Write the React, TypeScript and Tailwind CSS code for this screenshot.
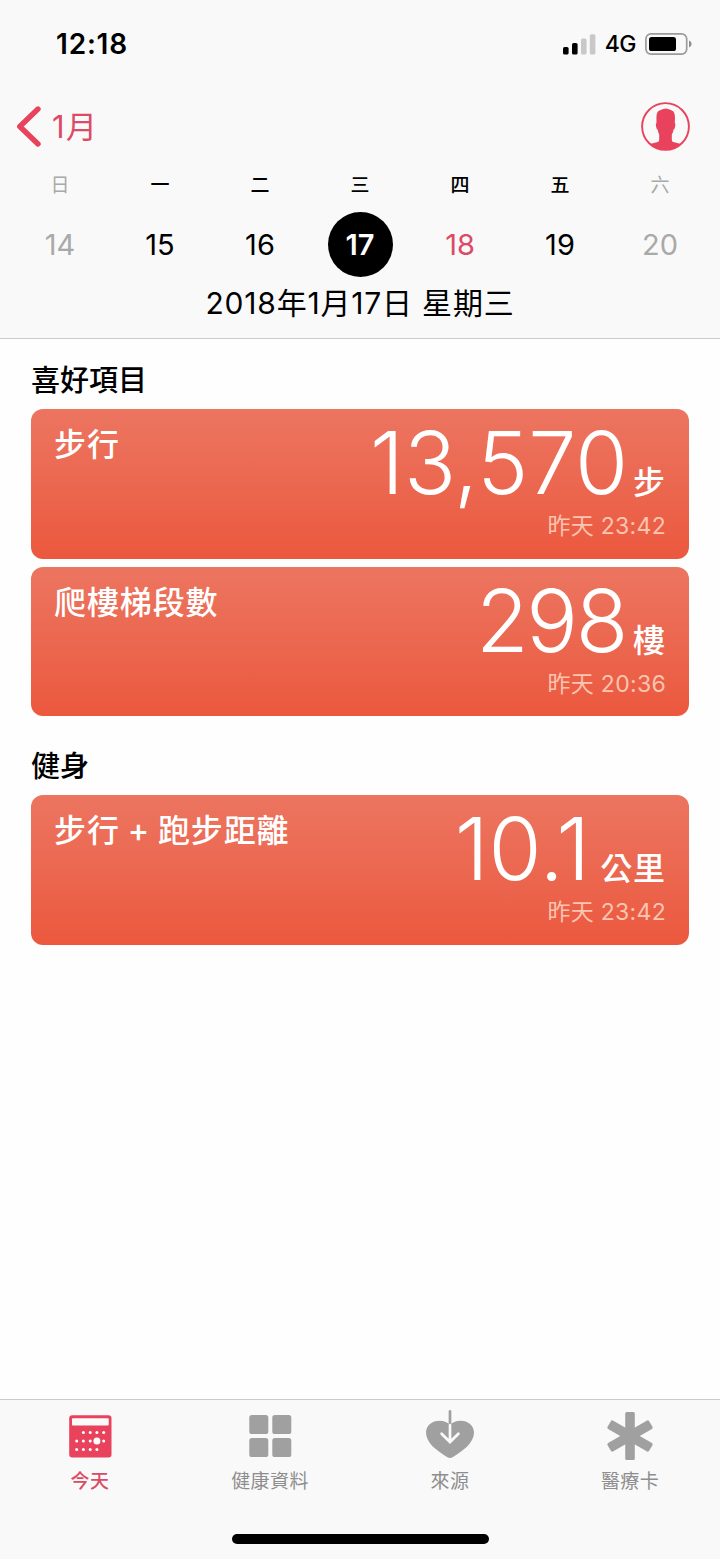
type Day = { name: string; date: number; tone: string; selected?: boolean };

type Metric = {
  title: string;
  value: string;
  unit: string;
  time: string;
  spacing: string;
};

const days: Day[] = [
  { name: "日", date: 14, tone: "text-[#a9a9a9]" },
  { name: "一", date: 15, tone: "text-black" },
  { name: "二", date: 16, tone: "text-black" },
  { name: "三", date: 17, tone: "text-white", selected: true },
  { name: "四", date: 18, tone: "text-[#dc4b64]" },
  { name: "五", date: 19, tone: "text-black" },
  { name: "六", date: 20, tone: "text-[#a9a9a9]" },
];

const favorites: Metric[] = [
  {
    title: "步行",
    value: "13,570",
    unit: "步",
    time: "昨天 23:42",
    spacing: "tracking-normal mr-[5px]",
  },
  {
    title: "爬樓梯段數",
    value: "298",
    unit: "樓",
    time: "昨天 20:36",
    spacing: "tracking-[-2.3px] mr-[7px]",
  },
];

const fitness: Metric[] = [
  {
    title: "步行 + 跑步距離",
    value: "10.1",
    unit: "公里",
    time: "昨天 23:42",
    spacing: "tracking-normal mr-[10px]",
  },
];

const SignalIcon = () => (
  <svg width="33" height="21" viewBox="0 0 33 21">
    <rect x="0" y="13" width="5.6" height="7.5" rx="1.6" fill="#000" />
    <rect x="9" y="9" width="5.6" height="11.5" rx="1.6" fill="#000" />
    <rect x="18" y="4.6" width="5.6" height="15.9" rx="1.6" fill="#c8c8c8" />
    <rect x="26.8" y="0.2" width="5.6" height="20.3" rx="1.6" fill="#c8c8c8" />
  </svg>
);

const BatteryIcon = () => (
  <svg width="47" height="22" viewBox="0 0 47 22">
    <rect
      x="0.9"
      y="0.9"
      width="40.8"
      height="20.2"
      rx="5"
      fill="none"
      stroke="#9b9b9b"
      strokeWidth="1.7"
    />
    <rect x="4" y="4" width="27" height="14" rx="2.6" fill="#000" />
    <path d="M44 7.6c3.4 1.2 3.4 5.6 0 6.8z" fill="#8f8f8f" />
  </svg>
);

const ProfileIcon = () => (
  <svg width="49" height="49" viewBox="0 0 49 49">
    <clipPath id="avatar">
      <circle cx="24.5" cy="24.5" r="23.5" />
    </clipPath>
    <circle
      cx="24.5"
      cy="24.5"
      r="23.4"
      fill="none"
      stroke="#e9425c"
      strokeWidth="1.9"
    />
    <path
      clipPath="url(#avatar)"
      fill="#e9425c"
      d="M24.8 6.4C21.500 6.800 18.500 8 17 9.500C15.400 11.500 15.300 14.500 15.500 21C14.600 21.400 14.800 23.500 15.300 25.500C15.600 26.800 16 27.500 16.700 27.600C17 30 17.600 31.500 18.200 32.600V37.500C18.200 39.200 17.400 39.900 15.800 40.300L9 42L4 49H45L40 42L33.200 40.300C31.600 39.900 30.800 39.200 30.800 37.500V32.600C31.600 31.500 32.200 30 32.500 27.600C33.200 27.500 33.600 26.800 33.900 25.500C34.400 23.500 34.600 21.400 33.800 21C34.200 14.500 34 11.500 32.400 9.500C30.800 8 28 6.800 24.800 6.400z"
    />
  </svg>
);

const CalendarIcon = () => (
  <svg className="mt-[15px]" width="43" height="43" viewBox="0 0 43 43">
    <rect x="0.2" y="0.2" width="42.3" height="42.3" rx="3" fill="#e9425c" />
    <rect x="3" y="3.2" width="36.7" height="7.4" rx="0.8" fill="#fafafa" />
    <g fill="#fff">
      <circle cx="14.4" cy="17.6" r="1.5" />
      <circle cx="21.2" cy="17.6" r="1.5" />
      <circle cx="27.9" cy="17.6" r="1.5" />
      <circle cx="34.7" cy="17.6" r="1.5" />
      <circle cx="7.7" cy="26" r="1.5" />
      <circle cx="14.4" cy="26" r="1.5" />
      <circle cx="21.2" cy="26" r="1.5" />
      <circle cx="27.9" cy="26" r="3.5" />
      <circle cx="34.7" cy="26" r="1.5" />
      <circle cx="7.7" cy="34.5" r="1.5" />
      <circle cx="14.4" cy="34.5" r="1.5" />
      <circle cx="21.2" cy="34.5" r="1.5" />
      <circle cx="27.9" cy="34.5" r="1.5" />
    </g>
  </svg>
);

const GridIcon = () => (
  <svg
    className="mt-[15px]"
    width="43"
    height="43"
    viewBox="0 0 43 43"
    fill="#a0a0a0"
  >
    <rect x="0.3" y="0.1" width="19" height="19" rx="2.6" />
    <rect x="23.3" y="0.1" width="19" height="19" rx="2.6" />
    <rect x="0.3" y="23.1" width="19" height="19" rx="2.6" />
    <rect x="23.3" y="23.1" width="19" height="19" rx="2.6" />
  </svg>
);

const HeartIcon = () => (
  <svg className="mt-[10px]" width="48" height="48" viewBox="0 0 48 48">
    <path
      fill="#a0a0a0"
      d="M24 15c2-2.700 6-4.300 10.500-4.300C42 10.700 48 15.600 48 22.600 48 33 37 41 26.600 47.200c-1.700 1-3.500 1-5.200 0C11 41 0 33 0 22.600c0-7 6-11.900 13.500-11.900C18 10.700 22 12.300 24 15z"
    />
    <path
      d="M24 1.400V15"
      stroke="#a0a0a0"
      strokeWidth="2.7"
      strokeLinecap="round"
    />
    <path
      d="M24 15v17.200M15.600 23.800l8.400 8.200 8.400-8.200"
      fill="none"
      stroke="#fafafa"
      strokeWidth="2.7"
      strokeLinecap="round"
    />
  </svg>
);

const AsteriskIcon = () => (
  <svg
    className="mt-[12px]"
    width="48"
    height="48"
    viewBox="0 0 48 48"
    fill="#a0a0a0"
  >
    <rect x="19.2" y="0" width="9.6" height="48" rx="1.5" />
    <rect
      x="19.2"
      y="0"
      width="9.6"
      height="48"
      rx="1.5"
      transform="rotate(60 24 24)"
    />
    <rect
      x="19.2"
      y="0"
      width="9.6"
      height="48"
      rx="1.5"
      transform="rotate(120 24 24)"
    />
  </svg>
);

const tabs = [
  { label: "今天", icon: <CalendarIcon />, active: true },
  { label: "健康資料", icon: <GridIcon />, active: false },
  { label: "來源", icon: <HeartIcon />, active: false },
  { label: "醫療卡", icon: <AsteriskIcon />, active: false },
];

const MetricCard = ({ title, value, unit, time, spacing }: Metric) => (
  <div className="flex h-[149.5px] justify-between rounded-xl bg-linear-to-b from-[#ec7560] to-[#eb583e] px-[23px] text-white">
    <h3 className="pt-[18px] text-[32px] leading-9 font-medium tracking-[0.9px] [word-spacing:-1.5px]">
      {title}
    </h3>
    <div className="flex flex-col items-end pt-[11px]">
      <div className="flex items-baseline">
        <span
          className={`text-[86px] leading-[86px] font-light ${spacing}`}
        >
          {value}
        </span>
        <span className="text-[32px] leading-9 font-medium tracking-[0.9px]">
          {unit}
        </span>
      </div>
      <span className="mt-[8px] text-[23px] leading-6 tracking-[0.3px] text-[#fbc5b0]">
        {time}
      </span>
    </div>
  </div>
);

const App = () => {
  return (
    <div className="flex h-[1559px] w-[720px] flex-col overflow-hidden bg-[#fefefe] font-['Inter','Noto_Sans_CJK_TC',sans-serif] text-black">
      <header className="h-[339px] border-b border-[#cbcbcb] bg-[#f9f9f9]">
        <div className="flex h-[88px] items-center justify-between pr-7 pl-14">
          <span className="text-[28px] leading-8 font-semibold tracking-[0.8px]">
            12:18
          </span>
          <div className="flex items-center">
            <SignalIcon />
            <span className="mr-[9px] ml-[9px] text-[23px] leading-6 font-medium tracking-[-0.5px]">
              4G
            </span>
            <BatteryIcon />
          </div>
        </div>

        <div className="flex h-[77px] items-center justify-between pr-[30px] pl-4 text-[#dc4b64]">
          <button className="flex items-center gap-[11px]">
            <svg width="25" height="41" viewBox="0 0 25 41">
              <path
                d="M22 3L3.800 20.500L22 38"
                fill="none"
                stroke="#e9425c"
                strokeWidth="5.4"
                strokeLinecap="round"
                strokeLinejoin="round"
              />
            </svg>
            <span className="pt-px text-[31px] leading-9 tracking-[1.5px]">
              1月
            </span>
          </button>
          <ProfileIcon />
        </div>

        <div className="grid grid-cols-7 px-[10px]">
          {days.map((day) => (
            <div key={day.date} className="flex flex-col items-center">
              <span
                className={`pt-[9px] text-[19px] leading-6 ${
                  day.tone === "text-[#a9a9a9]"
                    ? "text-[#a9a9a9]"
                    : "font-medium text-black"
                }`}
              >
                {day.name}
              </span>
              <span
                className={`mt-[14px] flex size-[65px] items-center justify-center rounded-full text-[29px] leading-9 ${day.tone} ${
                  day.selected ? "bg-black font-semibold" : ""
                }`}
              >
                {day.date}
              </span>
            </div>
          ))}
        </div>
        <p className="mt-[8px] text-center text-[30px] leading-9 tracking-[0.8px]">
          2018年1月17日 星期三
        </p>
      </header>

      <main className="flex-1 px-[31px]">
        <h2 className="mt-[26px] mb-[12px] text-[29px] leading-8 font-medium">
          喜好項目
        </h2>
        <div className="flex flex-col gap-2">
          {favorites.map((item) => (
            <MetricCard key={item.title} {...item} />
          ))}
        </div>
        <h2 className="mt-[35px] mb-[12px] text-[29px] leading-8 font-medium">
          健身
        </h2>
        {fitness.map((item) => (
          <MetricCard key={item.title} {...item} />
        ))}
      </main>

      <footer className="flex h-[160px] flex-col items-center border-t border-[#cbcbcb] bg-[#f9f9f9]">
        <nav className="grid w-full grid-cols-4">
          {tabs.map((tab) => (
            <button
              key={tab.label}
              className={`flex flex-col items-center ${
                tab.active ? "text-[#dc4b64]" : "text-[#8e8e8e]"
              }`}
            >
              <span className="flex h-[70px] items-start justify-center">
                {tab.icon}
              </span>
              <span
                className={`text-[19px] leading-6 tracking-[0.4px] ${
                  tab.active ? "font-medium" : ""
                }`}
              >
                {tab.label}
              </span>
            </button>
          ))}
        </nav>
        <div className="mt-[40px] h-[10px] w-[257px] rounded-full bg-black" />
      </footer>
    </div>
  );
};

export default App;
